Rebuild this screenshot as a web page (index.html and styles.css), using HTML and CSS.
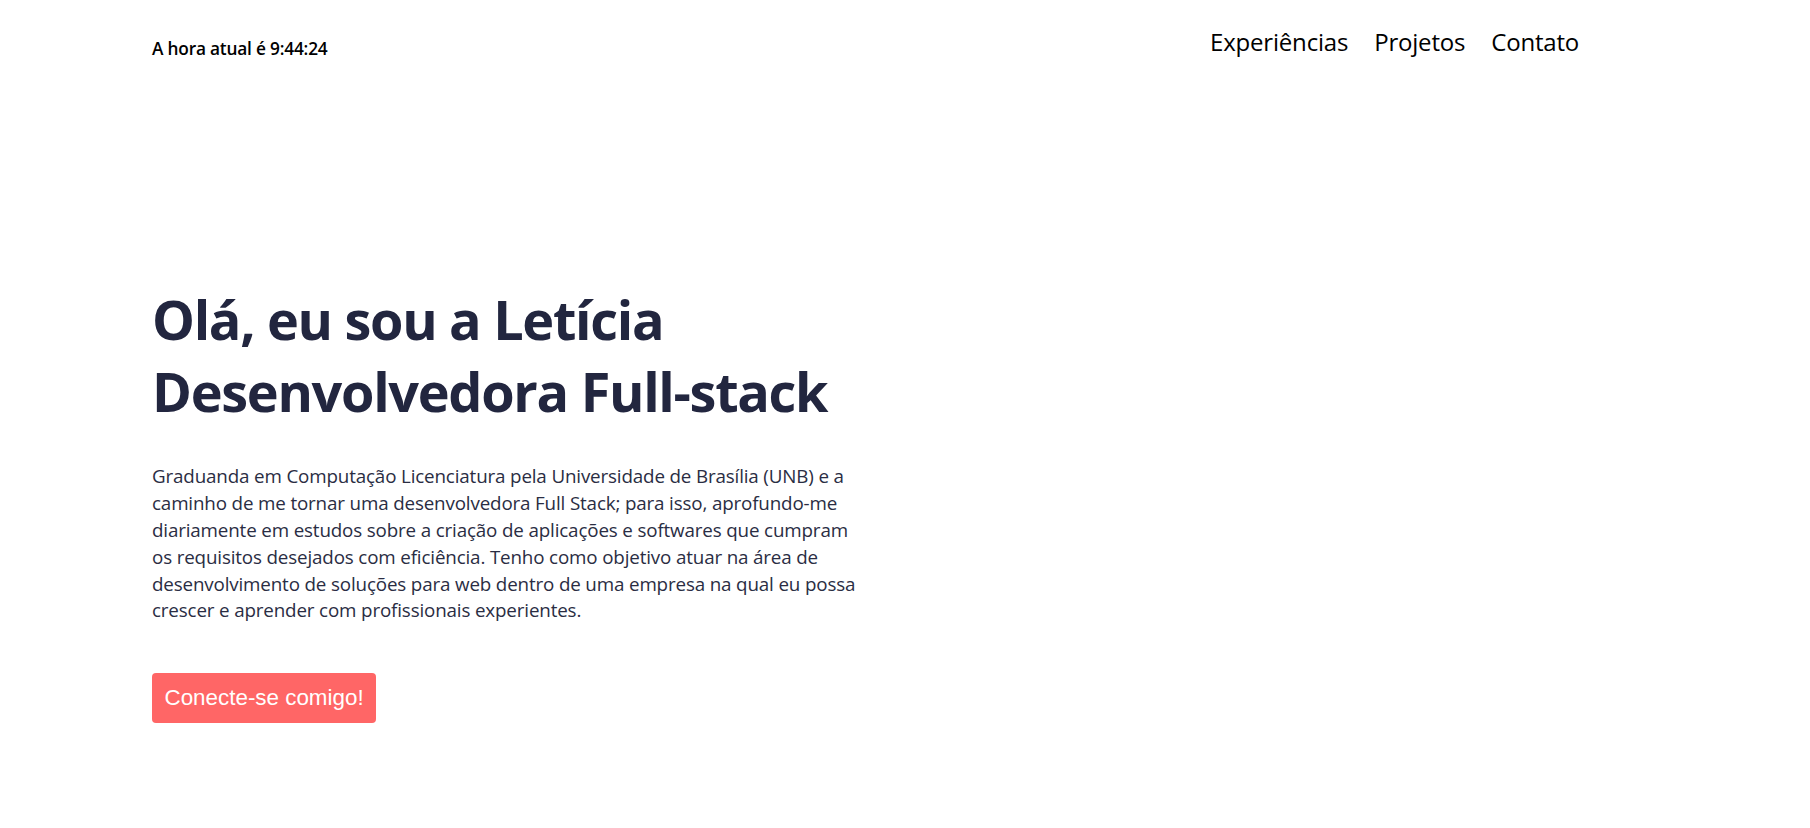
FILE: index.html
```html
<!DOCTYPE html>
<html lang="pt-BR">
<head>
<meta charset="utf-8">
<title>Letícia - Portfólio</title>
<link rel="stylesheet" href="styles.css">
</head>
<body>
<header class="topbar">
  <p class="clock">A hora atual é 9:44:24</p>
  <nav class="menu">
    <a href="#experiencias" class="menu-link">Experiências</a>
    <a href="#projetos" class="menu-link">Projetos</a>
    <a href="#contato" class="menu-link">Contato</a>
  </nav>
</header>
<main class="hero">
  <h1 class="hero-title">Olá, eu sou a Letícia<br>Desenvolvedora Full-stack</h1>
  <p class="hero-text">Graduanda em Computação Licenciatura pela Universidade de Brasília (UNB) e a caminho de me tornar uma desenvolvedora Full Stack; para isso, aprofundo-me diariamente em estudos sobre a criação de aplicações e softwares que cumpram os requisitos desejados com eficiência. Tenho como objetivo atuar na área de desenvolvimento de soluções para web dentro de uma empresa na qual eu possa crescer e aprender com profissionais experientes.</p>
  <button class="cta" type="button">Conecte-se comigo!</button>
</main>
</body>
</html>
```
FILE: styles.css
```css
html, body {
  margin: 0;
  padding: 0;
  background: #ffffff;
}

body {
  font-family: "Open Sans", "Noto Sans", sans-serif;
  color: #000000;
}

.topbar {
  display: flex;
  justify-content: space-between;
  align-items: flex-start;
  padding: 25px 231px 0 152px;
}

.clock {
  margin: 11.5px 0 0 0;
  font-size: 17.3px;
  font-weight: 600;
  letter-spacing: -0.2px;
}

.menu {
  display: flex;
  gap: 26px;
}

.menu-link {
  color: #000000;
  text-decoration: none;
  font-size: 24px;
  letter-spacing: -0.2px;
}

.hero {
  padding: 0 0 0 152px;
  margin-top: 223px;
}

.hero-title {
  margin: 0;
  font-size: 54px;
  line-height: 72.8px;
  font-weight: 700;
  letter-spacing: -1.3px;
  color: #22263f;
}

.hero-text {
  width: 714px;
  margin: 35px 0 0 0;
  font-size: 18.8px;
  line-height: 26.88px;
  letter-spacing: -0.15px;
  color: #2a2d43;
}

.cta {
  margin-top: 48.5px;
  padding: 12px 12.5px;
  border: none;
  border-radius: 4px;
  background: #ff6666;
  color: #ffffff;
  font-family: "Liberation Sans", Arial, sans-serif;
  font-size: 22.4px;
  line-height: 26px;
  cursor: pointer;
}
```
